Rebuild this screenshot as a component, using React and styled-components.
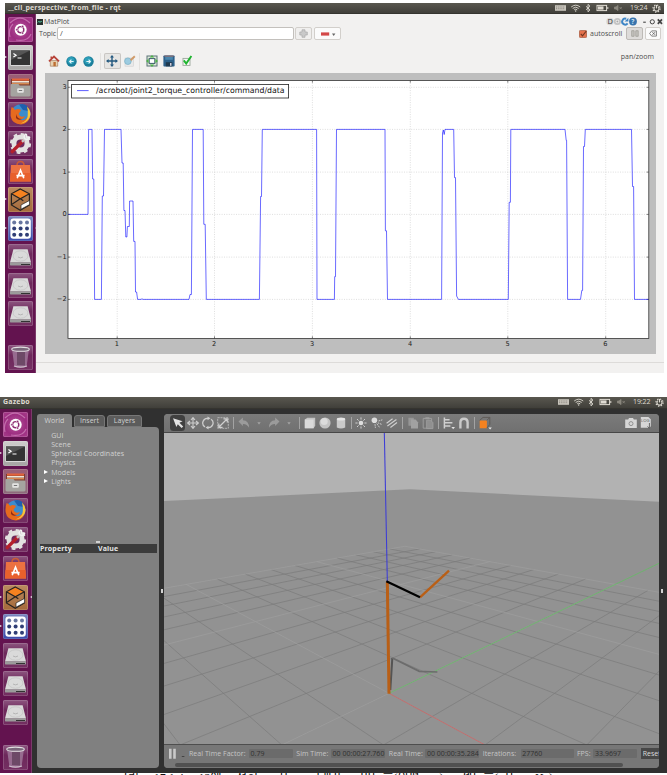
import React from 'react';
import styled, { createGlobalStyle } from 'styled-components';

const Global = createGlobalStyle`
  * { box-sizing: border-box; }
  html, body { margin: 0; padding: 0; background: #fff; }
  body { font-family: "Open Sans", "Noto Sans", sans-serif; font-weight: 500; overflow: hidden; }
  svg { display: block; flex: none; }
`;

const Page = styled.main`
  width: 667px;
  height: 775px;
  padding-top: 3px;
  display: flex;
  flex-direction: column;
  overflow: hidden;
`;

/* ---------- shared desktop chrome ---------- */

const Desktop = styled.section`
  width: ${(p) => p.$w}px;
  height: ${(p) => p.$h}px;
  margin-left: ${(p) => p.$left}px;
  flex: none;
  display: flex;
  flex-direction: column;
  overflow: hidden;
`;

const TitleBar = styled.header`
  height: ${(p) => p.$h}px;
  flex: none;
  display: flex;
  align-items: center;
  padding: 0 3px;
  background: linear-gradient(#59574f, #403f3a);
  border-bottom: 1px solid #35342f;
  color: #dfdbd2;
`;

const Title = styled.span`
  font-size: 7px;
  font-weight: 700;
  letter-spacing: ${(p) => p.$track || 0}px;
  line-height: 10px;
  flex: 1;
  white-space: nowrap;
`;

const Clock = styled.span`
  font-size: 7px;
  line-height: 10px;
  width: 17px;
  margin: 0 5px 0 7px;
  white-space: nowrap;
  letter-spacing: -0.1px;
`;

const Body = styled.div`
  flex: 1;
  min-height: 0;
  display: flex;
`;

const LauncherBar = styled.nav`
  width: ${(p) => p.$w}px;
  flex: none;
  display: flex;
  flex-direction: column;
  gap: ${(p) => p.$gap}px;
  padding: ${(p) => p.$pad};
  background: #63134f;
  border-right: 1px solid #7a3a69;
`;

const Tile = styled.div`
  position: relative;
  flex: none;
  width: 25px;
  height: 25px;
  margin-top: ${(p) => (p.$last ? 'auto' : 0)};
  border-radius: 2px;
  overflow: visible;
  box-shadow: inset 0 0 0 0.6px rgba(255, 255, 255, 0.28);
  background: ${(p) => p.$bg};
`;

const Pip = styled.i`
  position: absolute;
  top: 11px;
  ${(p) => (p.$right ? 'right: -3.5px;' : 'left: -3.5px;')}
  border-top: 1.7px solid transparent;
  border-bottom: 1.7px solid transparent;
  ${(p) => (p.$right ? 'border-right: 2.4px solid #eee;' : 'border-left: 2.4px solid #eee;')}
`;

const faint = 'linear-gradient(#8d5680, #6d285b 40%, #742f62)';
const tileBg = {
  dash: 'radial-gradient(circle at 50% 50%, #b5579a, #9c2c80 60%, #a93f8c)',
  term: 'linear-gradient(#cfcdcc, #a5a3a2)',
  files: 'linear-gradient(#9b5c75, #8d6b7c)',
  gazebo: 'linear-gradient(#b98a5f, #a56a3b)',
  rqt: 'linear-gradient(#7b86bd, #3a4bab)',
};

function TileArt({ kind }) {
  const p = { width: 25, height: 25, viewBox: '0 0 25 25', fill: 'none' };
  switch (kind) {
    case 'dash':
      return (
        <svg {...p}>
          <path d="M2 6 Q12 -4 22 6 M2 20 Q0 12 5 7 M23 17 Q20 25 8 23" stroke="#d189bd" strokeWidth="1.2" opacity=".7" />
          <circle cx="12.7" cy="12.7" r="6" fill="#fff" />
          <circle cx="12.7" cy="12.7" r="3.1" stroke="#8b2a70" strokeWidth="1.4" />
          <g fill="#8b2a70" stroke="#fff" strokeWidth=".6">
            <circle cx="8.9" cy="12.7" r="1.2" /><circle cx="14.6" cy="9.4" r="1.2" /><circle cx="14.6" cy="16.1" r="1.2" />
          </g>
        </svg>
      );
    case 'term':
      return (
        <svg {...p}>
          <rect x="2.2" y="4.6" width="20.6" height="16.4" rx="1" fill="#d8d8d8" />
          <rect x="3" y="5.4" width="19" height="14.6" fill="#343434" />
          <path d="M3 5.4h19L3 15z" fill="#555" />
          <path d="M5.4 8.4l2.7 1.8-2.7 1.8M9.5 13h4" stroke="#fff" strokeWidth="1.2" />
        </svg>
      );
    case 'files':
      return (
        <svg {...p}>
          <path d="M3 5h19v8H3z" fill="#7b3d30" />
          <path d="M4 4.5h17v2.2H4z" fill="#e2633a" />
          <path d="M4 7h17v1.6H4z" fill="#efe4d4" />
          <path d="M4 9h17v1.4H4z" fill="#d88a52" />
          <path d="M2.5 11q0-1 1-1h7l1.2 1.6h9.6q1.2 0 1.2 1V21q0 1.4-1.4 1.4H3.9q-1.4 0-1.4-1.4z" fill="#a5a4a0" />
          <rect x="9.2" y="14.2" width="6.6" height="4.6" rx="1" fill="#e4e4e2" />
          <path d="M10.8 16.5h3.4" stroke="#777" />
        </svg>
      );
    case 'firefox':
      return (
        <svg {...p}>
          <circle cx="12.8" cy="12" r="9.8" fill="#3b8ccd" />
          <path d="M11 2.4q9-2 10 6.6l-6-1z" fill="#1f5fae" />
          <path d="M3.6 5q2.4.6 3.4 3 3-2 6 0l-1 2q-2 1-1 3 2 3 6 1-2 4-6 3 4 3 8-1 3-4 0-11 4 4 3 9-2 8.4-9 8.4-9-.4-10.4-8.4-.5-5 1-9z" fill="#e66a1f" />
          <path d="M19 4.6q5.4 5.4 2.4 11.4-3 5.4-9 5.4 8-2.4 7.4-9.4.4-4-.8-7.4z" fill="#f7c43a" />
          <path d="M8 12q1 5 6 5-4 2-6-1z" fill="#8e2c16" />
        </svg>
      );
    case 'settings':
      return (
        <svg {...p}>
          <circle cx="12.5" cy="12.5" r="6.6" stroke="#e2e1e0" strokeWidth="5" />
          <circle cx="12.5" cy="12.5" r="9.4" stroke="#e2e1e0" strokeWidth="2.4" strokeDasharray="3.7 3.68" />
          <path d="M4.2 20.6L14.6 10.2" stroke="#b4202c" strokeWidth="3.4" strokeLinecap="round" />
          <path d="M14 10.8l4-4" stroke="#c8c8c8" strokeWidth="2.4" />
          <path d="M18.2 2.8q-3 2-1.4 5 3.2 1.5 5.2-1.4M18.2 2.8l.6 3 3.2.6" stroke="#f1f1f1" strokeWidth="1.6" />
        </svg>
      );
    case 'software':
      return (
        <svg {...p}>
          <path d="M9 6.5q0-4 3.5-4t3.5 4" stroke="#c95a37" strokeWidth="1.6" />
          <path d="M3 6h19l1 16.5H2z" fill="#ec7141" />
          <path d="M2.6 14h19.9l.5 8.5H2z" fill="#e8602c" />
          <path d="M9.2 19.2l3.3-8 3.3 8M8.4 16.6h8.2" stroke="#fff" strokeWidth="1.6" />
        </svg>
      );
    case 'gazebo':
      return (
        <svg {...p}>
          <path d="M12.3 2L21 6.6l-8.7 5L3.6 6.6z" fill="#f58220" />
          <path d="M12.3 2L21.4 6.8V18l-9.1 5.2L3.4 18V6.8zM3.4 6.8l8.9 5 9.1-5M12.3 11.8L3.6 17.6M12.3 11.8l3 2" stroke="#252220" strokeWidth="1.2" />
          <path d="M13 18l8.6-4.6v4.2L13 22.2z" fill="#fff" stroke="#252220" strokeWidth=".7" />
        </svg>
      );
    case 'rqt':
      return (
        <svg {...p}>
          <rect x="2.4" y="2.4" width="20.4" height="20.4" rx="3" fill="#fff" />
          {[6.4, 12.6, 18.8].map((y) => [6.2, 12.6, 19].map((x) => (
            <circle key={`${x}-${y}`} cx={x} cy={y} r="2" fill={y < 8 ? '#6876a0' : '#303e75'} />
          )))}
        </svg>
      );
    case 'disk':
      return (
        <svg {...p}>
          <path d="M5.4 5.2h14.2L23 18.4H2z" fill="#dadada" />
          <path d="M2 18.2h21v2.2q0 1.2-1.2 1.2H3.2Q2 21.6 2 20.4z" fill="#9b9b9b" />
          <path d="M13 20h9v1h-9z" fill="#333" />
          <ellipse cx="12.5" cy="12" rx="7.4" ry="5.2" stroke="#c2c2c2" strokeWidth=".7" />
          <path d="M10 13q2.5 1.8 5 0" stroke="#b0b0b0" strokeWidth=".9" />
        </svg>
      );
    default:
      return (
        <svg {...p}>
          <path d="M4 4h17l-2.4 17.5q-6 2-12.2 0z" fill="#a482a0" opacity=".75" />
          <path d="M9 7v13l8 .5V7z" fill="#5f3d5a" opacity=".75" />
          <path d="M6 21q6.5 2.3 13 0" stroke="#cdbdcb" strokeWidth="1.2" />
          <ellipse cx="12.5" cy="4.2" rx="8.8" ry="2.1" fill="#79667a" stroke="#e2e0e2" strokeWidth="1.1" />
        </svg>
      );
  }
}

const TILES = ['dash', 'term', 'files', 'firefox', 'settings', 'software', 'gazebo', 'rqt', 'disk', 'disk', 'disk', 'trash'];

function Launcher({ w, gap, pad, left, right }) {
  return (
    <LauncherBar $w={w} $gap={gap} $pad={pad}>
      {TILES.map((kind, i) => (
        <Tile key={i} $bg={tileBg[kind] || faint} $last={kind === 'trash'}>
          <TileArt kind={kind} />
          {left.includes(kind) && <Pip />}
          {right === kind && <Pip $right />}
        </Tile>
      ))}
    </LauncherBar>
  );
}

function Indicators({ time }) {
  return (
    <>
      <svg width="68" height="10" viewBox="0 0 68 10" fill="none">
        <rect x="0" y="2.2" width="11" height="5.6" fill="#c9c5bc" />
        <path d="M1 4h9M1 5.7h9" stroke="#77736c" strokeWidth=".7" strokeDasharray="1 .8" />
        <path d="M16.2 4q4.5-3.6 9 0M17.7 5.4q3-2.4 6 0M19.2 6.8q1.5-1.2 3 0" stroke="#dfdbd2" strokeWidth=".9" />
        <circle cx="20.7" cy="8" r=".7" fill="#dfdbd2" />
        <path d="M31 3.3l4 3.6-2 1.9V1.4l2 1.8-4 3.6" stroke="#dfdbd2" strokeWidth=".9" />
        <rect x="42" y="2.4" width="9.6" height="5.2" stroke="#dfdbd2" />
        <rect x="43" y="3.4" width="5.5" height="3.2" fill="#dfdbd2" />
        <path d="M52.8 4v2" stroke="#dfdbd2" />
        <path d="M59.5 4H61l2-1.6v5.2L61 6h-1.5zM64.5 4l2.3 2.3M66.8 4l-2.3 2.3" stroke="#8c887f" strokeWidth=".8" fill="#8c887f" />
      </svg>
      <Clock>{time}</Clock>
      <svg width="9" height="9" viewBox="0 0 9 9" fill="none" stroke="#dfdbd2">
        <path d="M3 2.6a2.5 2.5 0 1 0 3 0" strokeWidth="1.1" />
        <circle cx="4.5" cy="4.6" r="3.6" strokeWidth="1.1" strokeDasharray="1.4 1.42" />
        <path d="M4.5 1v3.4" strokeWidth="1.1" />
      </svg>
    </>
  );
}

/* ---------- rqt MatPlot window ---------- */

const RqtWindow = styled.div`
  flex: 1;
  min-width: 0;
  display: flex;
  flex-direction: column;
  background: #f2f1f0;
  color: #4c4c4c;
  font-size: 7px;
`;

const DockTitle = styled.div`
  height: 13px;
  padding: 2px 0 0 1px;
  display: flex;
  align-items: center;
  gap: 1px;
`;

const Label = styled.span`
  font-size: 7px;
  line-height: 10px;
  white-space: nowrap;
  letter-spacing: ${(p) => p.$track || 0}px;
  width: ${(p) => (p.$w ? `${p.$w}px` : 'auto')};
  padding-left: ${(p) => p.$pl || 0}px;
`;

const Spacer = styled.div`
  flex: 1;
`;

const TopicRow = styled.div`
  height: 13px;
  padding: 0 3px 0 3px;
  display: flex;
  align-items: center;
`;

const TopicInput = styled.div`
  width: 237px;
  height: 12.5px;
  padding-left: 2px;
  border: 1px solid #c3c0bc;
  border-radius: 2px;
  background: #fff;
  line-height: 11px;
  font-size: 7.5px;
`;

const PushButton = styled.div`
  width: ${(p) => p.$w}px;
  height: 12.5px;
  margin-left: ${(p) => p.$ml}px;
  display: flex;
  align-items: center;
  justify-content: center;
  border: 1px solid ${(p) => (p.$pressed ? '#bdbab6' : '#d2cfcb')};
  border-radius: 2px;
  background: ${(p) => (p.$pressed ? '#dddbd9' : p.$flat ? '#f0efee' : '#fbfbfb')};
`;

const PlotToolbar = styled.div`
  height: 33px;
  padding: 9px 10px 0 9px;
  display: flex;
  align-items: flex-start;
`;

const PlotTools = styled.div`
  display: flex;
  align-items: center;
  height: 24px;
`;

const ModeText = styled.span`
  padding-top: 3px;
  font-size: 7px;
  line-height: 10px;
`;

const PlotTool = styled.div`
  width: ${(p) => p.$w || 17.5}px;
  height: 16.5px;
  display: flex;
  align-items: center;
  justify-content: center;
  border-radius: 2px;
  ${(p) => p.$on && 'background: #e6e5e3; box-shadow: inset 0 0 0 1px #c9c6c3;'}
`;

const PlotSep = styled.i`
  width: 1px;
  height: 17px;
  margin: 0 ${(p) => p.$r}px 0 ${(p) => p.$l}px;
  background: #e3e1df;
`;

const Canvas = styled.div`
  width: 611px;
  height: 281px;
  margin-left: 9px;
  background: #bebebe;
`;

const StatusLine = styled.div`
  flex: 1;
  margin-top: 8px;
  border-top: 1px solid #dddbd9;
`;

const Y = { 3: 87.3, 2: 129.4, 1: 172.1, 0: 214.4, '-1': 257.1, '-2': 299.4 };
const X = { 1: 117.2, 2: 214.5, 3: 312.4, 4: 410.3, 5: 507.8, 6: 605.7 };

const TRACE =
  '68,214.4 88,214.4 88.6,129.4 92,129.4 92.6,179 93.8,179 94.6,299.4 101.4,299.4 102.3,196 103.5,196 104.5,129.4 ' +
  '121,129.4 122,163 123.2,163 123.9,210.5 125,210.5 125.8,237 126.9,237 127.4,226.5 129.3,226.5 129.6,201 133,201 ' +
  '133.7,241.4 135,241.4 135.5,292 136.6,292 137.6,299.4 141,299.4 142,298.8 143,299.4 189,299.4 190,294.5 191.4,294.5 192.5,129.4 203.2,129.4 ' +
  '203.8,224.3 205.2,224.3 206.3,299.4 259.4,299.4 260.6,196.5 261.5,196.5 262.3,129.4 316.6,129.4 317,299.4 ' +
  '334.4,299.4 334.7,276.6 335.5,276.6 336.5,129.4 385,129.4 385.4,230.8 386.5,230.8 387.5,299.4 441.6,299.4 ' +
  '442.5,133 443.3,130 444.2,134.5 445,129.4 453.7,129.4 454.5,177.6 455.5,177.6 456.6,296 458.4,299.4 508.3,299.4 ' +
  '509.2,202.3 510.4,202.3 510.8,129.4 565,129.4 566.2,140.4 566.6,140.4 567.6,299.4 580.5,299.4 581.8,290.4 ' +
  '582.6,290.4 583.5,146.5 584.5,146.5 585.3,129.4 631.5,129.4 632.5,186.5 633.6,186.5 634.5,299.4 649,299.4';

function TorquePlot() {
  return (
    <svg width="611" height="281" viewBox="45 73 611 281" fill="none">
      <rect x="68" y="80.5" width="580.8" height="258" fill="#fff" />
      {Object.entries(Y).map(([v, y]) => (
        <g key={v}>
          <path d={`M68 ${y}H648.8`} stroke="#c8c8c8" strokeWidth=".6" strokeDasharray="1 1.4" />
          <path d={`M68 ${y}h2.2M648.8 ${y}h-2.2`} stroke="#333" strokeWidth=".6" />
          <text x="66.6" y={y + 2} textAnchor="end" fontFamily="DejaVu Sans" fontSize="6.6" fill="#222">{v.replace('-', '−')}</text>
        </g>
      ))}
      {Object.entries(X).map(([v, x]) => (
        <g key={v}>
          <path d={`M${x} 80.5V338.5`} stroke="#c8c8c8" strokeWidth=".6" strokeDasharray="1 1.4" />
          <path d={`M${x} 338.5v-2.2M${x} 80.5v2.2`} stroke="#333" strokeWidth=".6" />
          <text x={x - 0.3} y="345.8" textAnchor="middle" fontFamily="DejaVu Sans" fontSize="6.6" fill="#222">{v}</text>
        </g>
      ))}
      <polyline points={TRACE} stroke="#0000ff" strokeOpacity=".78" strokeWidth=".75" strokeLinejoin="round" />
      <rect x="68" y="80.5" width="580.8" height="258" stroke="#333" strokeWidth=".8" />
      <rect x="71.6" y="84.4" width="217" height="13.6" fill="#fff" stroke="#222" strokeWidth=".8" />
      <path d="M77 90.6h11.6" stroke="#0000ff" strokeOpacity=".8" strokeWidth=".8" />
      <text x="96" y="93.2" textLength="188.6" lengthAdjust="spacingAndGlyphs" fontFamily="DejaVu Sans" fontSize="7.9" fill="#111">
        /acrobot/joint2_torque_controller/command/data
      </text>
    </svg>
  );
}

const NavBall = ({ dir }) => (
  <svg width="11" height="11" viewBox="0 0 11 11">
    <circle cx="5.5" cy="5.5" r="5.2" fill="#1b7f9b" />
    <circle cx="5" cy="4.5" r="3.6" fill="#2d9fb9" />
    <path d={dir === 'back' ? 'M7.6 5.5H3.8M5.4 3.7L3.6 5.5l1.8 1.8' : 'M3.4 5.5h3.8M5.6 3.7l1.8 1.8-1.8 1.8'} stroke="#e6f6fa" strokeWidth="1.1" fill="none" />
  </svg>
);

function Rqt() {
  return (
    <RqtWindow>
      <DockTitle>
        <svg width="6" height="6" viewBox="0 0 6 6"><rect width="6" height="6" fill="#27302f" /><path d="M.8 3.5L2 2l1 1.6L4 2l1.2 1" stroke="#58c4a0" strokeWidth=".8" fill="none" /></svg>
        <Label>MatPlot</Label>
        <Spacer />
        <svg width="58" height="9" viewBox="0 0 58 9" fill="none">
          <circle cx="4" cy="4.5" r="3.8" fill="#d9d8d6" />
          <text x="1.4" y="7.2" fontFamily="Open Sans" fontSize="7.4" fill="#333">D</text>
          <circle cx="11.4" cy="4.5" r="2.7" stroke="#c4c4c4" strokeWidth="1.8" />
          <circle cx="11.4" cy="4.5" r="1" fill="#aaa" />
          <path d="M21.6 6.4A3 3 0 1 1 20.2 1.8" stroke="#3f86c6" strokeWidth="2" />
          <path d="M18.6 4.4h3.8V.8z" fill="#3f86c6" />
          <circle cx="27" cy="4.5" r="3.9" fill="#3874ad" />
          <text x="25.3" y="7" fontFamily="Open Sans" fontSize="6.5" fontWeight="700" fill="#cfe2f2">?</text>
          <path d="M37.2 5.2h2.6" stroke="#444" strokeWidth="1.1" />
          <circle cx="46.3" cy="4.8" r="2.1" stroke="#444" strokeWidth="1" />
          <path d="M51.8 2.4l4.2 4.4M56 2.4l-4.2 4.4" stroke="#444" strokeWidth="1.7" />
        </svg>
      </DockTitle>
      <TopicRow>
        <Label $w={18} $track={-0.1}>Topic</Label>
        <TopicInput>/</TopicInput>
        <PushButton $w={17} $ml={1} $flat>
          <svg width="9" height="9" viewBox="0 0 9 9"><path d="M3 .8h3V3h2.3v3H6v2.3H3V6H.8V3H3z" fill="#c9c9c9" stroke="#ababab" strokeWidth=".7" /></svg>
        </PushButton>
        <PushButton $w={27} $ml={1.5}>
          <svg width="18" height="8" viewBox="0 0 18 8"><rect x="3" y="2.4" width="8.2" height="3.2" fill="#d34848" /><path d="M14 3.4h3.4L15.7 6z" fill="#666" /></svg>
        </PushButton>
        <Spacer />
        <svg width="8" height="8" viewBox="0 0 8 8"><rect x=".4" y=".4" width="7.2" height="7.2" rx="1" fill="#e5724c" stroke="#9f5238" strokeWidth=".7" /><path d="M1.8 3.8l1.7 2L7.3 1" stroke="#723520" strokeWidth="1.1" fill="none" /></svg>
        <Label $w={39} $pl={3}>autoscroll</Label>
        <PushButton $w={17} $ml={0} $pressed>
          <svg width="8" height="7" viewBox="0 0 8 7"><path d="M.7.7h2.4v5.6H.7zM4.8.7h2.4v5.6H4.8z" fill="#c5c4bf" stroke="#98978f" strokeWidth=".7" /></svg>
        </PushButton>
        <PushButton $w={16.5} $ml={1.5}>
          <svg width="8" height="7" viewBox="0 0 8 7" fill="none"><path d="M2.7.9h4.7v5.2H2.7L.6 3.5z" stroke="#666" strokeWidth=".8" /><path d="M3.4 2.2l2.6 2.6M6 2.2L3.4 4.8" stroke="#555" strokeWidth=".8" /></svg>
        </PushButton>
      </TopicRow>
      <PlotToolbar>
        <PlotTools>
          <PlotTool>
            <svg width="12" height="12" viewBox="0 0 12 12"><path d="M2.3 5.6h7.4v5.6H2.3z" fill="#e7d1b2" stroke="#9a6b4a" strokeWidth=".6" /><path d="M1 6.3L6 1.6l5 4.7" stroke="#b8443a" strokeWidth="1.8" fill="none" /><path d="M2.5 1.5h1.6v2H2.5z" fill="#b8443a" /><path d="M5.4 7h2.4v4.2H5.4z" fill="#bd6e31" /></svg>
          </PlotTool>
          <PlotTool><NavBall dir="back" /></PlotTool>
          <PlotTool><NavBall dir="forward" /></PlotTool>
          <PlotSep $l={2.5} $r={3} />
          <PlotTool $on $w={16.5}>
            <svg width="12" height="12" viewBox="0 0 12 12" fill="none"><path d="M6 1.2v9.6M1.2 6h9.6" stroke="#24597f" strokeWidth="1.4" /><path d="M6 0l2 2.6H4zM6 12l2-2.6H4zM0 6l2.6-2v4zM12 6L9.4 4v4z" fill="#24597f" /></svg>
          </PlotTool>
          <PlotTool>
            <svg width="13" height="12" viewBox="0 0 13 12" fill="none"><rect x="2" y="3" width="8.6" height="8.2" fill="#e9e9e9" stroke="#d0d0d0" strokeWidth=".6" /><circle cx="4.9" cy="6.2" r="3.3" fill="#9ccbe0" stroke="#7fb3c8" strokeWidth=".8" /><path d="M7.6 5.2L11.8 1.2" stroke="#d09a68" strokeWidth="1.9" /></svg>
          </PlotTool>
          <PlotSep $l={1} $r={3} />
          <PlotTool>
            <svg width="12" height="12" viewBox="0 0 12 12" fill="none"><rect x="1" y="1" width="10" height="10" fill="#dfe9dc" stroke="#5b7376" strokeWidth="1" /><rect x="3.2" y="3.6" width="5.6" height="4.8" fill="#fff" stroke="#3b5e6a" strokeWidth="1" /><path d="M6 0l2.2 2.6H3.8zM6 12l2.2-2.6H3.8zM0 6l2.6-2.2v4.4zM12 6L9.4 3.8v4.4z" fill="#4fb14a" /></svg>
          </PlotTool>
          <PlotTool>
            <svg width="12" height="12" viewBox="0 0 12 12"><rect x=".4" y=".4" width="11.2" height="11.2" rx=".8" fill="#2c608a" /><rect x="2.2" y=".6" width="7.6" height="4.2" fill="#4a86ad" /><path d="M1.4 .6h9.2v1H1.4z" fill="#9b6560" /><rect x="2.8" y="7.2" width="6.6" height="4.2" fill="#203a4f" /><rect x="7" y="8" width="1.5" height="2.8" fill="#ccd" /></svg>
          </PlotTool>
          <PlotTool>
            <svg width="12" height="12" viewBox="0 0 12 12" fill="none"><rect x="2" y="3.4" width="7" height="7" fill="#f8f8f8" stroke="#9aa69a" strokeWidth=".9" /><path d="M2.8 5.4l2.4 3.2L10.4 1" stroke="#1fb52f" strokeWidth="1.9" /></svg>
          </PlotTool>
        </PlotTools>
        <Spacer />
        <ModeText>pan/zoom</ModeText>
      </PlotToolbar>
      <Canvas><TorquePlot /></Canvas>
      <StatusLine />
    </RqtWindow>
  );
}

/* ---------- Gazebo window ---------- */

const GazeboBody = styled.div`
  flex: 1;
  min-width: 0;
  display: flex;
  padding: 5px 0 4.5px 5px;
  background: #303030;
  color: #d2d2d2;
`;

const SidePanel = styled.aside`
  width: 122px;
  flex: none;
  display: flex;
  flex-direction: column;
`;

const Tabs = styled.div`
  height: 13.5px;
  display: flex;
  align-items: flex-end;
  gap: 2px;
`;

const Tab = styled.div`
  width: ${(p) => p.$w}px;
  height: ${(p) => (p.$on ? 13.5 : 11.5)}px;
  margin-bottom: ${(p) => (p.$on ? 0 : 0.5)}px;
  display: flex;
  align-items: center;
  justify-content: center;
  border-radius: 3px 3px 0 0;
  font-size: 7px;
  letter-spacing: 0.05px;
  background: ${(p) => (p.$on ? '#808080' : '#5c5c5c')};
  border: ${(p) => (p.$on ? 0 : '0.5px solid #777')};
`;

const TreePanel = styled.div`
  flex: 1;
  display: flex;
  flex-direction: column;
  padding: 3.5px 2.5px 0;
  border-radius: 0 4px 4px 4px;
  background: #808080;
`;

const TreeRow = styled.div`
  height: 9.25px;
  display: flex;
  align-items: center;
  font-size: 7px;
  line-height: 9px;
  white-space: nowrap;
  letter-spacing: 0.07px;
`;

const Twisty = styled.i`
  width: 0;
  height: 0;
  margin: 0 3.2px 0 4.5px;
  border-left: 4px solid ${(p) => (p.$on ? '#fff' : 'transparent')};
  border-top: 2.9px solid transparent;
  border-bottom: 2.9px solid transparent;
`;

const Grip = styled.i`
  width: ${(p) => (p.$vertical ? 2 : 4)}px;
  height: ${(p) => (p.$vertical ? 4.5 : 2)}px;
  background: #d2d2d2;
`;

const GripRow = styled.div`
  margin-top: 55px;
  height: 2.5px;
  display: flex;
  justify-content: center;
`;

const PropertyHead = styled.div`
  height: 9px;
  display: grid;
  grid-template-columns: 58px 1fr;
  background: #3c3c3c;
  color: #e6e6e6;
  font-size: 7px;
  font-weight: 700;
  line-height: 9px;
  letter-spacing: 0.15px;
  padding-left: 0.5px;
`;

const Splitter = styled.div`
  width: ${(p) => p.$w}px;
  flex: none;
  display: flex;
  align-items: center;
  justify-content: center;
`;

const RenderPane = styled.div`
  width: 495px;
  flex: none;
  display: flex;
  flex-direction: column;
  border-radius: 4px;
  overflow: hidden;
  background: #777;
`;

const ToolStrip = styled.div`
  height: 19px;
  flex: none;
  display: flex;
  align-items: center;
  padding: 0 5px 0 6px;
  background: linear-gradient(#7b7b7b, #707070);
  border-bottom: 1px solid #474747;
`;

const ToolCell = styled.div`
  width: 15.15px;
  height: 16px;
  display: flex;
  align-items: center;
  justify-content: center;
  border-radius: 3.5px;
  background: ${(p) => (p.$on ? '#404040' : 'none')};
`;

const ToolSep = styled.i`
  width: 1px;
  height: 12px;
  margin: 0 2.4px;
  background: #a3a3a3;
`;

const SimBar = styled.div`
  height: 19px;
  flex: none;
  display: flex;
  align-items: center;
  padding-left: 5px;
  border-top: 1px solid #4e4e4e;
  overflow: hidden;
  font-size: 7px;
`;

const SimLabel = styled.span`
  width: ${(p) => p.$w}px;
  flex: none;
  white-space: nowrap;
  letter-spacing: 0.04px;
  color: #c6c6c6;
`;

const SimField = styled.span`
  width: ${(p) => p.$w}px;
  height: 9px;
  flex: none;
  margin-right: 3.3px;
  padding-left: 1.5px;
  border-radius: 1px;
  background: #6b6b6b;
  color: #303030;
  line-height: 9px;
  white-space: nowrap;
  letter-spacing: 0.04px;
`;

const ResetButton = styled.span`
  flex: none;
  width: 30px;
  height: 11px;
  padding-left: 2px;
  background: #484848;
  color: #ddd;
  line-height: 11px;
`;

const ScrollTrack = styled.div`
  height: 5px;
  padding: 0.5px 36px 0 11px;
  background: #777;
`;

const ScrollThumb = styled.div`
  height: 3.5px;
  border-radius: 2px;
  background: #515151;
`;

const F = 1286;
const PITCH = 0.2756;
const CAM_H = 3.72;

// Project a ground point (metres) to view coordinates.
function camera(x, y) {
  const s = Math.SQRT1_2;
  const ahead = (y - x) * s;
  const d = 6.56 + ahead;
  return {
    side: -0.384 + (x + y) * s + 0.0045 * ahead,
    drop: CAM_H * Math.cos(PITCH) - d * Math.sin(PITCH),
    depth: d * Math.cos(PITCH) + CAM_H * Math.sin(PITCH),
  };
}

function groundLine(x1, y1, x2, y2) {
  let a = camera(x1, y1);
  let b = camera(x2, y2);
  if (a.depth > b.depth) [a, b] = [b, a];
  const near = 1.5;
  if (b.depth <= near) return '';
  if (a.depth < near) {
    const t = (near - a.depth) / (b.depth - a.depth);
    a = { side: a.side + (b.side - a.side) * t, drop: a.drop + (b.drop - a.drop) * t, depth: near };
  }
  const pt = (p) => `${(754.5 + (F * p.side) / p.depth).toFixed(1)} ${(475 + (F * p.drop) / p.depth).toFixed(1)}`;
  return `M${pt(a)}L${pt(b)}`;
}

const STEPS = Array.from({ length: 21 }, (_, i) => i - 10);
const lineSet = (keep) =>
  STEPS.filter(keep).map((i) => groundLine(i, -10, i, 10) + groundLine(-10, i, 10, i)).join('');
const MINOR = lineSet((i) => i % 5 !== 0);
const MAJOR = lineSet((i) => i % 5 === 0);

function Scene() {
  return (
    <svg width="495" height="311" viewBox="12 9 1485 933" preserveAspectRatio="none" fill="none">
      <rect x="12" y="9" width="1485" height="933" fill="#b2b2b2" />
      <path d="M12 213L750 178L1497 215V942H12z" fill="#929292" />
      <path d={MINOR} stroke="#7b7b7b" strokeWidth="2.2" />
      <path d={MAJOR} stroke="#9d9d9d" strokeWidth="2.2" />
      <path d={groundLine(0, 0, 10, 0)} stroke="#cd6262" strokeWidth="2.4" />
      <path d="M687 790L1063 609L1497 400" stroke="#68b868" strokeWidth="2.6" />
      <path d="M673 9L682 455" stroke="#3d3dd6" strokeWidth="3.2" />
      <path d="M691 780L697 684" stroke="#545454" strokeWidth="6" />
      <path d="M697 684L778 724L832 726" stroke="#6c6c6c" strokeWidth="5" />
      <path d="M682 455L687 791" stroke="#b95f16" strokeWidth="9" />
      <path d="M780 502L867 422" stroke="#b95f16" strokeWidth="7" />
      <path d="M679 454L780 502" stroke="#000" strokeWidth="6.5" />
    </svg>
  );
}

const TOOL_ART = {
  select: <path d="M2 2.2l9.6 3-3.2 1.6 3.8 3.6-1.6 1.6-3.8-3.8L5.4 11z" fill="#e3e3e3" />,
  move: <path d="M7 2v10M2 7h10M5 4l2-2.4L9 4M5 10l2 2.4L9 10M4 5L1.6 7 4 9M10 5l2.4 2L10 9" stroke="#cdcdcd" strokeWidth="1.1" />,
  rotate: <><path d="M4 10.9A4.6 4.6 0 0 1 7 2.4M10 3.2A4.6 4.6 0 0 1 7 11.6" stroke="#cdcdcd" strokeWidth="1.3" /><path d="M6.5.5v3.8l3-2zM7.5 9.7v3.8l-3-2z" fill="#cdcdcd" /></>,
  scale: <><path d="M1.7 1.7h10.6v10.6H1.7z" stroke="#b4b4b4" strokeDasharray="2 .8" /><path d="M3 11L11 3M7.5 2.8h3.8v3.8M2.8 7.6v3.7h3.8" stroke="#d0d0d0" strokeWidth="1.2" /></>,
  undo: <path d="M1.5 5.6l4.4-4v2.6q6 .2 6.2 7.6-2-4-6.2-3.8v2z" fill="#9b9b9b" />,
  redo: <path d="M12.5 5.6l-4.4-4v2.6q-6 .2-6.2 7.6 2-4 6.2-3.8v2z" fill="#9b9b9b" />,
  caret: <path d="M5.3 6.3h3.4L7 8.4z" fill="#a6a6a6" />,
  box: <><path d="M1.8 3.6L4.4 1.8h7.8v8l-1.6 2.4H1.8z" fill="#c4c4c4" /><path d="M1.8 3.6h8.8v8.6H1.8z" fill="#dadada" /></>,
  ball: <><circle cx="7" cy="7" r="5.6" fill="#c4c4c4" /><circle cx="6.2" cy="5.4" r="3.5" fill="#dcdcdc" /></>,
  cyl: <><path d="M2.8 3v8.6q4.2 2 8.4 0V3z" fill="#cacaca" /><ellipse cx="7" cy="2.9" rx="4.2" ry="1.5" fill="#e5e5e5" /></>,
  sun: <><circle cx="7" cy="7" r="2.3" fill="#dedede" /><path d="M7 1.4v2.2M7 10.4v2.2M1.4 7h2.2M10.4 7h2.2M3 3l1.6 1.6M9.4 9.4L11 11M11 3L9.4 4.6M4.6 9.4L3 11" stroke="#cfcfcf" /></>,
  spot: <><circle cx="4.4" cy="4.2" r="2.8" fill="#dedede" /><path d="M8.5 5l4-1.2M7.8 6.8l4.4 1.8M6.8 7.6l3 4.2M5 8.2l.4 3.6" stroke="#cfcfcf" strokeDasharray="1.6 .8" /></>,
  beams: <path d="M1.6 7.2l6-4.4M2.4 10l9-6.6M5.4 11.4l6.6-4.8" stroke="#cfcfcf" strokeWidth="1.2" />,
  copy: <><path d="M2.4 1.8h5.4v8H2.4z" fill="#969696" /><path d="M5 3.6h4.6l2.4 2.6v6.2H5z" fill="#a1a1a1" /></>,
  paste: <><path d="M2.2 2.4h8.4v9.8H2.2z" stroke="#9c9c9c" /><path d="M4.4 1.2h4v2h-4z" fill="#9c9c9c" /><path d="M5.6 4.2h4l2.4 2.4v6H5.6z" fill="#909090" stroke="#a3a3a3" strokeWidth=".7" /></>,
  align: <><path d="M2.4 1.4v11.2M2.4 3.7h5.2M2.4 6.8h8M2.4 10h6" stroke="#cfcfcf" strokeWidth="1.5" /><path d="M9.4 11h3.6l-1.8 2.2z" fill="#e2e2e2" /></>,
  magnet: <path d="M3.4 12.4V6.6q0-3.9 3.6-3.9t3.6 3.9v5.8" stroke="#cacaca" strokeWidth="2.4" />,
  view: <><path d="M1.7 4.4h7.2v7.8H1.7z" fill="#f58220" /><path d="M1.7 4.4L5 1.4h6.8v7L8.9 12M8.9 4.4l2.9-3" stroke="#5c5855" strokeWidth=".9" /><path d="M10.4 11.6h3.4L12.1 13.6z" fill="#eee" /></>,
  camera: <><path d="M1.2 3.4h3L5 2h4l.8 1.4h3V12H1.2z" fill="#d6d6d6" /><circle cx="7" cy="7.6" r="2" stroke="#888" strokeWidth=".9" /></>,
  log: <><path d="M1.8 1h7.6l2.4 2.2v8.6H1.8z" fill="#d6d6d6" /><text x="2.1" y="5.6" fontFamily="Open Sans" fontSize="4.2" fill="#555">LOG</text><path d="M10.4 7v5.4M8.6 10.4l1.8 2.2 1.8-2.2" stroke="#666" strokeWidth="1" /></>,
};

const STRIP = ['select', 'move', 'rotate', 'scale', '|', 'undo', 'caret', 'redo', 'caret', '|', 'box', 'ball', 'cyl', '|',
  'sun', 'spot', 'beams', '|', 'copy', 'paste', '|', 'align', 'magnet', '|', 'view', '', 'camera', 'log'];

function Tool({ name }) {
  return (
    <ToolCell $on={name === 'select'}>
      <svg width="14" height="14" viewBox="0 0 14 14" fill="none">{TOOL_ART[name]}</svg>
    </ToolCell>
  );
}

const WORLD = [['GUI'], ['Scene'], ['Spherical Coordinates'], ['Physics'], ['Models', true], ['Lights', true]];

function Gazebo() {
  return (
    <GazeboBody>
      <SidePanel>
        <Tabs>
          <Tab $w={35} $on>World</Tab>
          <Tab $w={31}>Insert</Tab>
          <Tab $w={35}>Layers</Tab>
        </Tabs>
        <TreePanel>
          {WORLD.map(([name, branch]) => (
            <TreeRow key={name}><Twisty $on={branch} />{name}</TreeRow>
          ))}
          <GripRow><Grip /></GripRow>
          <PropertyHead><span>Property</span><span>Value</span></PropertyHead>
        </TreePanel>
      </SidePanel>
      <Splitter $w={5}><Grip $vertical /></Splitter>
      <RenderPane>
        <ToolStrip>
          {STRIP.map((name, i) => {
            if (name === '|') return <ToolSep key={i} />;
            if (name === '') return <Spacer key={i} />;
            return <Tool key={i} name={name} />;
          })}
        </ToolStrip>
        <Scene />
        <SimBar>
          <svg width="20" height="12" viewBox="0 0 20 12"><path d="M0 .8h2.6v10H0zM4.2.8h2.6v10H4.2z" fill="#c9c9c9" /><path d="M12.8 8h2.6v1h-2.6z" fill="#444" /></svg>
          <SimLabel $w={60}>Real Time Factor:</SimLabel><SimField $w={44}>0.79</SimField>
          <SimLabel $w={34.7}>Sim Time:</SimLabel><SimField $w={54.5}>00 00:00:27.760</SimField>
          <SimLabel $w={36.6}>Real Time:</SimLabel><SimField $w={54}>00 00:00:35.284</SimField>
          <SimLabel $w={38}>Iterations:</SimLabel><SimField $w={53}>27760</SimField>
          <SimLabel $w={16.5}>FPS:</SimLabel><SimField $w={44}>33.9697</SimField>
          <ResetButton>Reset</ResetButton>
        </SimBar>
        <ScrollTrack><ScrollThumb /></ScrollTrack>
      </RenderPane>
      <Splitter $w={6}><Grip $vertical /></Splitter>
    </GazeboBody>
  );
}

const Gap = styled.div`
  height: 24px;
  flex: none;
`;

const Caption = styled.p`
  height: 3px;
  flex: none;
  margin: 0 0 0 117px;
  width: 436px;
  color: #111;
  font: 12px/11px "Liberation Serif", "Noto Sans CJK KR", serif;
  text-align: justify;
  text-align-last: justify;
  white-space: nowrap;
  overflow: hidden;
`;

export default function App() {
  return (
    <Page>
      <Global />
      <Desktop $w={659} $h={370} $left={5}>
        <TitleBar $h={11}>
          <Title $track={0.16}>__cli_perspective_from_file - rqt</Title>
          <Indicators time="19:24" />
        </TitleBar>
        <Body>
          <Launcher w={31} gap={3.42} pad="3px 0 3px 3px" left={['term', 'gazebo', 'rqt']} right="rqt" />
          <Rqt />
        </Body>
      </Desktop>
      <Gap />
      <Desktop $w={667} $h={375.5} $left={0}>
        <TitleBar $h={11.5}>
          <Title $track={0.2}>Gazebo</Title>
          <Indicators time="19:22" />
        </TitleBar>
        <Body>
          <Launcher w={32} gap={3.85} pad="3.3px 0 3px 3px" left={['term', 'gazebo', 'rqt']} right="gazebo" />
          <Gazebo />
        </Body>
      </Desktop>
      <Caption>그림 17.1.4 12에 적힌 로드 그래프, 비드호(위편 a), 센드호(로드 Hz)</Caption>
    </Page>
  );
}
